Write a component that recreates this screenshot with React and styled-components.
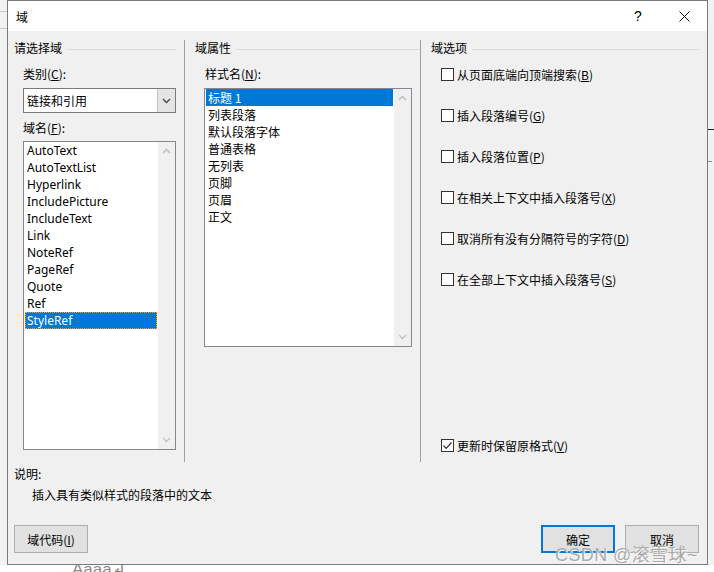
import React from "react";
import styled, { createGlobalStyle } from "styled-components";

const Global = createGlobalStyle`
  html, body { margin: 0; padding: 0; }
  body {
    width: 714px; height: 572px; overflow: hidden;
    background: #f2f2f2;
    font-family: "Noto Sans CJK SC", "Noto Sans", sans-serif;
    font-size: 12px; color: #000;
  }
  u { text-decoration: underline; text-underline-offset: 1px; }
`;

const Stage = styled.div`
  position: relative;
  width: 714px;
  height: 572px;
  padding-left: 7px;
  box-sizing: border-box;
`;

const BackLine = styled.div`
  position: absolute;
  left: ${(p) => p.$x}px;
  top: ${(p) => p.$y}px;
  width: ${(p) => p.$w}px;
  height: 1px;
  background: ${(p) => p.$c};
`;

const BackText = styled.div`
  position: absolute;
  left: 72px;
  top: 560px;
  font-family: "Liberation Sans", sans-serif;
  font-size: 17px;
  line-height: 20px;
  color: #8a8a8a;
`;

const BottomStrip = styled.div`
  position: absolute;
  left: 0;
  top: 565px;
  width: 714px;
  height: 7px;
  background: #fff;
`;

const Dialog = styled.div`
  position: relative;
  z-index: 1;
  width: 701px;
  height: 565px;
  box-sizing: border-box;
  border: 1px solid #7a7a7a;
  background: #f0f0f0;
  display: flex;
  flex-direction: column;
`;

const TitleBar = styled.div`
  height: 30px;
  background: #fff;
  display: flex;
  align-items: center;
  padding-left: 8px;
  flex-shrink: 0;
`;

const Title = styled.div`
  flex: 1;
  font-size: 12px;
`;

const TitleBtn = styled.div`
  width: 46px;
  height: 30px;
  display: flex;
  align-items: center;
  justify-content: center;
  font-family: "Liberation Sans", sans-serif;
  font-size: 14px;
`;

const Body = styled.div`
  flex: 1;
  display: flex;
  flex-direction: column;
  padding: 9px 8px 9px 6px;
`;

const Columns = styled.div`
  display: flex;
  height: 422px;
`;

const Column = styled.div`
  display: flex;
  flex-direction: column;
  width: ${(p) => p.$w}px;
  flex: ${(p) => (p.$w ? "none" : "1")};
  padding-left: ${(p) => p.$pl || 0}px;
  border-right: ${(p) => (p.$sep ? "1px solid #a0a0a0" : "none")};
  box-sizing: border-box;
`;

const GroupHead = styled.div`
  display: flex;
  align-items: center;
  gap: 5px;
  height: 16px;
  line-height: 16px;
  margin-right: ${(p) => p.$mr}px;
  &::after {
    content: "";
    flex: 1;
    height: 1px;
    background: #dcdcdc;
    margin-top: 2px;
  }
`;

const Inner = styled.div`
  display: flex;
  flex-direction: column;
  padding-left: ${(p) => p.$pl}px;
  flex: 1;
`;

const Label = styled.div`
  line-height: 16px;
  height: 16px;
  margin-top: ${(p) => p.$mt}px;
  padding-left: ${(p) => p.$pl || 0}px;
`;

const Combo = styled.div`
  margin-top: 6px;
  width: 153px;
  height: 25px;
  box-sizing: border-box;
  border: 1px solid #7a7a7a;
  background: #fff;
  display: flex;
  align-items: stretch;
`;

const ComboText = styled.div`
  flex: 1;
  padding-left: 3px;
  line-height: 23px;
`;

const ComboBtn = styled.div`
  width: 17px;
  background: #e5e5e5;
  border-left: 1px solid #c4c4c4;
  display: flex;
  align-items: center;
  justify-content: center;
`;

const ListBox = styled.div`
  margin-top: ${(p) => p.$mt}px;
  width: ${(p) => p.$w}px;
  height: ${(p) => p.$h}px;
  box-sizing: border-box;
  border: 1px solid #828790;
  background: #fff;
  display: flex;
`;

const Items = styled.div`
  flex: 1;
  padding: 0 1px;
  display: flex;
  flex-direction: column;
`;

const Item = styled.div`
  height: 17px;
  line-height: 17px;
  padding-left: 2px;
  font-family: ${(p) => (p.$latin ? '"Noto Sans", "Noto Sans CJK SC", sans-serif' : '"Noto Sans CJK SC", sans-serif')};
  background: ${(p) => (p.$sel ? "#0078d7" : "transparent")};
  color: ${(p) => (p.$sel ? "#fff" : "#000")};
  outline: ${(p) => (p.$focus ? "1px dotted #f2a33a" : "none")};
  outline-offset: -1px;
`;

const ScrollBar = styled.div`
  width: 17px;
  background: #f0f0f0;
  display: flex;
  flex-direction: column;
  justify-content: space-between;
  align-items: center;
  padding: 6px 0;
`;

const OptRow = styled.label`
  display: flex;
  align-items: center;
  gap: 3px;
  height: 17px;
  margin-top: ${(p) => p.$mt};
  margin-bottom: ${(p) => p.$mb || 0}px;
`;

const Box = styled.span`
  width: 13px;
  height: 13px;
  box-sizing: border-box;
  border: 1px solid #333;
  background: #fff;
  display: flex;
  align-items: center;
  justify-content: center;
`;

const Desc = styled.div`
  line-height: 16px;
  margin-top: ${(p) => p.$mt}px;
  padding-left: ${(p) => p.$pl || 0}px;
`;

const ButtonRow = styled.div`
  display: flex;
  margin-top: 22px;
  gap: 10px;
`;

const Button = styled.div`
  width: 74px;
  height: 28px;
  box-sizing: border-box;
  border: ${(p) => (p.$primary ? "2px solid #0078d7" : "1px solid #adadad")};
  background: #e1e1e1;
  display: flex;
  align-items: center;
  justify-content: center;
  margin-left: ${(p) => (p.$push ? "auto" : "0")};
`;

const Watermark = styled.div`
  position: absolute;
  z-index: 2;
  left: 555px;
  top: 540px;
  font-size: 18px;
  font-family: "Liberation Sans", "Noto Sans CJK SC", sans-serif;
  color: rgba(140, 140, 140, 0.75);
  text-shadow: 0 0 1px #fff, 1px 1px 0 rgba(255,255,255,0.8);
  letter-spacing: 0.4px;
`;

const Up = () => (
  <svg width="9" height="6" viewBox="0 0 9 6">
    <path d="M1 5 L4.5 1.5 L8 5" fill="none" stroke="#c2c2c2" strokeWidth="1.6" />
  </svg>
);
const Down = ({ c = "#c2c2c2" }) => (
  <svg width="9" height="6" viewBox="0 0 9 6">
    <path d="M1 1 L4.5 4.5 L8 1" fill="none" stroke={c} strokeWidth="1.3" />
  </svg>
);

const Check = ({ on, children, mt, mb }) => (
  <OptRow $mt={mt} $mb={mb}>
    <Box>
      {on && (
        <svg width="11" height="11" viewBox="0 0 11 11">
          <path d="M1.5 5.5 L4.2 8.3 L9.5 2.5" fill="none" stroke="#333" strokeWidth="1.2" />
        </svg>
      )}
    </Box>
    <span>{children}</span>
  </OptRow>
);

const fields = [
  "AutoText", "AutoTextList", "Hyperlink", "IncludePicture", "IncludeText",
  "Link", "NoteRef", "PageRef", "Quote", "Ref", "StyleRef",
];
const styleNames = ["标题 1", "列表段落", "默认段落字体", "普通表格", "无列表", "页脚", "页眉", "正文"];

export default function App() {
  return (
    <>
      <Global />
      <Stage>
        <BackLine $x={0} $y={11} $w={7} $c="#c8c8c8" />
        <BackLine $x={0} $y={28} $w={7} $c="#c8c8c8" />
        <BackLine $x={708} $y={129} $w={6} $c="#222" />
        <BackLine $x={708} $y={161} $w={4} $c="#888" />
        <BottomStrip />
        <BackText>Aaaa↲</BackText>
        <Dialog>
          <TitleBar>
            <Title>域</Title>
            <TitleBtn>?</TitleBtn>
            <TitleBtn>
              <svg width="11" height="11" viewBox="0 0 11 11">
                <path d="M0.5 0.5 L10.5 10.5 M10.5 0.5 L0.5 10.5" stroke="#111" strokeWidth="1" />
              </svg>
            </TitleBtn>
          </TitleBar>
          <Body>
            <Columns>
              <Column $w={171} $sep>
                <GroupHead $mr={8}>请选择域</GroupHead>
                <Inner $pl={9}>
                  <Label $mt={10}>类别(<u>C</u>):</Label>
                  <Combo>
                    <ComboText>链接和引用</ComboText>
                    <ComboBtn><Down c="#444" /></ComboBtn>
                  </Combo>
                  <Label $mt={7}>域名(<u>F</u>):</Label>
                  <ListBox $mt={5} $w={153} $h={309}>
                    <Items>
                      {fields.map((f) => (
                        <Item key={f} $latin $sel={f === "StyleRef"} $focus={f === "StyleRef"}>{f}</Item>
                      ))}
                    </Items>
                    <ScrollBar><Up /><Down /></ScrollBar>
                  </ListBox>
                </Inner>
              </Column>
              <Column $w={236} $pl={10} $sep>
                <GroupHead $mr={0}>域属性</GroupHead>
                <Inner $pl={9}>
                  <Label $mt={10} $pl={1}>样式名(<u>N</u>):</Label>
                  <ListBox $mt={6} $w={208} $h={259}>
                    <Items>
                      {styleNames.map((s, i) => (
                        <Item key={s} $sel={i === 0}>{s}</Item>
                      ))}
                    </Items>
                    <ScrollBar><Up /><Down /></ScrollBar>
                  </ListBox>
                </Inner>
              </Column>
              <Column $pl={10}>
                <GroupHead $mr={0}>域选项</GroupHead>
                <Inner $pl={10}>
                  <Check mt="10px">从页面底端向顶端搜索(<u>B</u>)</Check>
                  <Check mt="24px">插入段落编号(<u>G</u>)</Check>
                  <Check mt="24px">插入段落位置(<u>P</u>)</Check>
                  <Check mt="24px">在相关上下文中插入段落号(<u>X</u>)</Check>
                  <Check mt="24px">取消所有没有分隔符号的字符(<u>D</u>)</Check>
                  <Check mt="24px">在全部上下文中插入段落号(<u>S</u>)</Check>
                  <Check on mt="auto" mb={8}>更新时保留原格式(<u>V</u>)</Check>
                </Inner>
              </Column>
            </Columns>
            <Desc $mt={4}>说明:</Desc>
            <Desc $mt={5} $pl={18}>插入具有类似样式的段落中的文本</Desc>
            <ButtonRow>
              <Button>域代码(<u>I</u>)</Button>
              <Button $primary $push>确定</Button>
              <Button>取消</Button>
            </ButtonRow>
          </Body>
        </Dialog>
        <Watermark>CSDN @滚雪球~</Watermark>
      </Stage>
    </>
  );
}
